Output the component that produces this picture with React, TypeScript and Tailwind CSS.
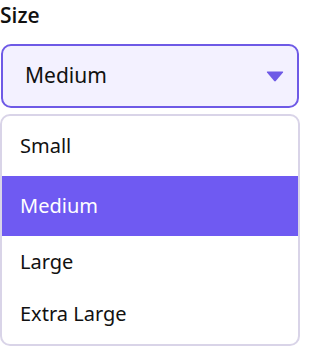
import React from "react";

export default function App() {
  const items = [
    { label: "Small", h: "h-[60px]", active: false },
    { label: "Medium", h: "h-[60px]", active: true },
    { label: "Large", h: "h-[52px]", active: false },
    { label: "Extra Large", h: "h-[52px]", active: false },
  ];
  return (
    <div
      className="w-[300px] h-[346px] bg-white flex flex-col overflow-hidden"
      style={{ fontFamily: '"Noto Sans", "Open Sans", sans-serif' }}
    >
      <div className="text-[21px] leading-[30px] font-semibold text-[#111111] h-[44px] font-['Open_Sans',sans-serif]">Size</div>
      <div className="w-[298px] ml-px h-[64px] shrink-0 border-2 border-[#6e5ae6] rounded-[10px] bg-[#f3f1ff] flex items-center justify-between pl-[22px] pr-[13px]">
        <span className="text-[21px] text-[#111111]">Medium</span>
        <svg width="18" height="11" viewBox="0 0 18 11">
          <path d="M1.5 0.5 H16.5 Q17.6 0.5 17 1.5 L9.8 10 Q9 10.9 8.2 10 L1 1.5 Q0.4 0.5 1.5 0.5 Z" fill="#6e5ae6" />
        </svg>
      </div>
      <div className="mt-[6px] w-[300px] flex-1 border-2 border-[#d9d4e8] rounded-[10px] flex flex-col overflow-hidden">
        {items.map((it) => (
          <div
            key={it.label}
            className={`${it.h} shrink-0 flex items-center pl-[18px] text-[20px] ${
              it.active ? "bg-[#6f5af2] text-white" : "text-[#111111]"
            }`}
          >
            {it.label}
          </div>
        ))}
      </div>
    </div>
  );
}
